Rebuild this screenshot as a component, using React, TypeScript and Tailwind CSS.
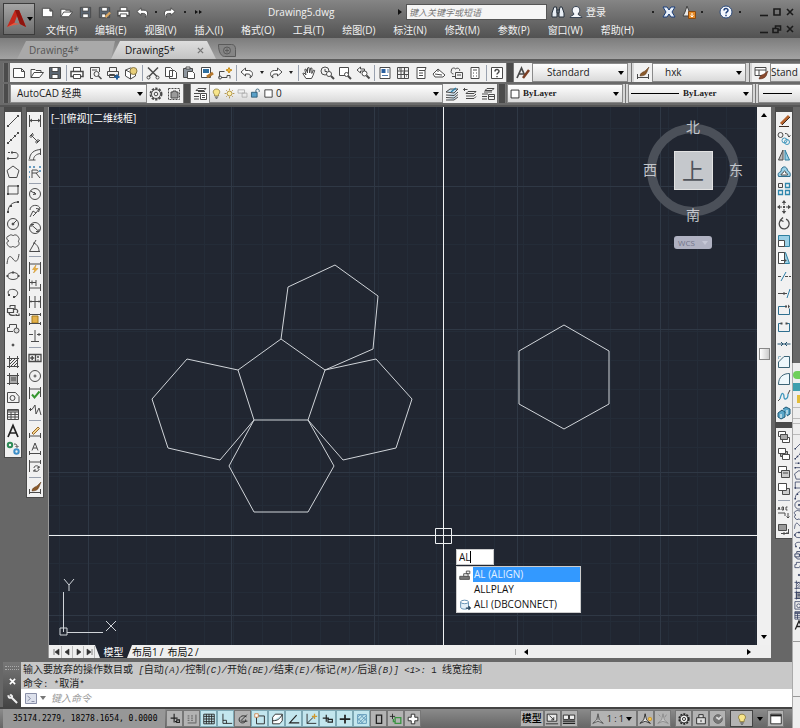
import type { ReactNode } from 'react';
import clsx from 'clsx';

// Every glyph lives on a 16x16 grid and inherits its stroke from the <svg>
const icons: Record<string, ReactNode> = {
  // file + edit
  new: <path d="M2.500 3.500h8l3 3v6h-11zM10.500 3.500v3h3" fill="#fff" />,
  open: (
    <>
      <path d="M2 12.500v-8h4l1 1h5v2" fill="#fff" />
      <path d="M2 12.500l3-5h9.500l-4 5z" fill="#fff" />
    </>
  ),
  save: (
    <>
      <path d="M2.500 2.500h11v11h-11z" fill="#5b6672" />
      <path d="M5 2.500h6v4H5zM5 9.500h6v4H5z" fill="#fff" />
    </>
  ),
  saveAs: (
    <>
      <path d="M2.500 2.500h11v11h-11z" fill="#5b6672" />
      <path d="M5 2.500h6v4H5zM5 9.500h4v4H5z" fill="#fff" />
      <path d="M9 13l5-5" stroke="#d9a561" strokeWidth="2.500" />
    </>
  ),
  print: (
    <>
      <path d="M4.500 6V2.500h7V6" fill="#fff" />
      <path d="M2 6.500h12v5H2z" fill="#fff" strokeWidth="1.500" />
      <path d="M4.500 9.500h7v4h-7z" fill="#fff" />
    </>
  ),
  preview: (
    <>
      <path d="M6 13.500H3.500v-11h9V7M5 5h5" />
      <circle cx="9.500" cy="9" r="2.500" />
      <path d="M11.500 11l3 3" strokeWidth="1.500" />
    </>
  ),
  publish: (
    <>
      <path d="M4.500 6V2.500h7V6M2.500 6.500h11v4h-11zM4.500 9.500h5v3h-5z" />
      <path d="M12 9.500v5M9.500 12h5" stroke="#1f5d9c" strokeWidth="2" />
    </>
  ),
  cube: (
    <>
      <path d="M2.500 5l5-2 5 2v6l-5 3-5-3zM2.500 5l5 2.500V14" fill="#fff" />
      <circle cx="10.500" cy="6" r="3.500" fill="#e8cf7a" stroke="#8b7a45" />
    </>
  ),
  cut: (
    <>
      <path d="M3 2.500l9 9M13 2.500l-9 9" strokeWidth="1.500" />
      <circle cx="3.500" cy="12.500" r="1.500" />
      <circle cx="12.500" cy="12.500" r="1.500" />
    </>
  ),
  copy: <path d="M2.500 2.500h5l2 2v7h-7zM6.500 5.500h5l2 2v6h-7z" fill="#fff" />,
  paste: (
    <>
      <path d="M2.500 3.500h9v9h-9z" fill="#8d959d" />
      <path d="M5 2h4v2H5z" fill="#fff" />
      <path d="M6.500 6.500h5l2 2v5h-7z" fill="#fff" />
    </>
  ),
  match: (
    <>
      <path d="M2.500 2.500h9v10h-9z" fill="#fff" />
      <path d="M4 4h6v4H4z" fill="#2f6f9f" stroke="none" />
      <path d="M8 12l6-4" stroke="#b5772c" strokeWidth="3" />
    </>
  ),
  block: (
    <>
      <path d="M2.500 6.500h5M2.500 6.500v6M4 12.500h6v-2h3v3" />
      <circle cx="3" cy="12.500" r="1.500" />
      <path d="M12 2.500l1 2 2 .5-2 1-1 2-1-2-2-1 2-.5z" fill="#f0b83c" stroke="#c58c1c" />
    </>
  ),
  undo: <path d="M2 7l4.500-4v2.500h3c5 0 5 5.500 1.500 7.500 1-3 0-4-2-4H6.500v2z" fill="#fff" />,
  redo: <path d="M14 7L9.500 3v2.500h-3c-5 0-5 5.500-1.500 7.500-1-3 0-4 2-4h2.500v2z" fill="#fff" />,
  hand: (
    <path
      d="M5 13.500L1.800 8.500l1.200-.5 2 2-1.200-5.500 1.200-.5 1.500 4V3l1.500-.5.7 5.500 1-5 1.300.2-.2 5.300 1.700-3.500 1.200.5-1.700 5-1.500 3z"
      fill="#fff"
    />
  ),
  zoomRt: (
    <>
      <circle cx="6" cy="6" r="4" />
      <path d="M6 4v2.500h2" />
      <circle cx="10" cy="9" r="2.500" fill="#fff" />
      <path d="M12 11l3 3" strokeWidth="2" />
    </>
  ),
  zoomWin: (
    <>
      <path d="M2.500 2.500h9v8h-9z" fill="#fff" />
      <circle cx="9.500" cy="9.500" r="2" fill="#fff" />
      <path d="M11 11l3 3" strokeWidth="2" />
    </>
  ),
  zoomPrev: (
    <>
      <path d="M5.500 2L2 5l3.500 3V6h4V4h-4z" fill="#fff" />
      <circle cx="9.500" cy="8.500" r="2.500" fill="#fff" />
      <path d="M11.500 10.500l3 3" strokeWidth="2" />
    </>
  ),
  props: (
    <>
      <path d="M3 2.500h10v11H3z" fill="#fff" />
      <path d="M4.500 4h4v4h-4z" fill="#2a5f9e" stroke="none" />
      <path d="M10 5h2M10 7h2M5 10.500h6" stroke="#5179a8" />
    </>
  ),
  design: <path d="M2.500 2.500h11v11h-11zM6 2.500v11M9.500 2.500v11M2.500 6h11M2.500 9.500h11M4 4h1M8 8h1M11 11h1" />,
  palette: <path d="M4 2.500h9l-1 3v8H4zM6 5.500h6M6 8h4M6 10.500h4" fill="#fff" />,
  sheet: <path d="M2 9l5-5 7 6-2 2H4zM4 9l7 1M7 4v3" fill="#fff" />,
  markup: <path d="M2.500 5c0-3 4-2 4-1 2-2 5 0 4 2M2.500 5c-1 2 0 4 2 4M6.500 7.500h7v6h-7zM8 10h4M3 11.500h3" />,
  calc: <path d="M4 2.500h8v11H4zM6 5h4M6 8h1M9 8h1M6 11h1M9 11h1" fill="#fff" />,
  help: (
    <>
      <path d="M2.500 2.500h11v11h-11z" fill="#fff" />
      <path d="M6 6.500C6 4 10 4 10 6.300 10 8 8 8 8 9.500M8 11v1.200" strokeWidth="1.500" />
    </>
  ),
  textStyle: (
    <>
      <path d="M2 13L6.500 3 10 11M4 9h4.500" strokeWidth="1.700" />
      <path d="M8 13l6-8" stroke="#7b3f25" strokeWidth="2.500" />
    </>
  ),
  dimStyle: (
    <>
      <path d="M2.500 9v5M13.500 9v5M2.500 12.500h11" />
      <path d="M5 11c0-3 3-4 5-5l4-4-2 5c-1 3-4 4-7 4z" fill="#8a5a2b" stroke="#5f3b1c" strokeWidth=".5" />
    </>
  ),
  tableStyle: (
    <>
      <path d="M2 2.500h11v8H2zM2 5h11M6 5v5" fill="#fff" />
      <path d="M6 14c1-4 3-4 5-5l4-3-2 5c-1 2-4 3-7 3z" fill="#8b4a2e" stroke="#5c2d19" strokeWidth=".5" />
    </>
  ),
  // layers + workspace
  gear: (
    <>
      <circle cx="8" cy="8" r="5.500" strokeDasharray="2.300 1.200" strokeWidth="2" />
      <circle cx="8" cy="8" r="4.500" fill="#f1f1f1" />
      <circle cx="8" cy="8" r="1.800" />
    </>
  ),
  gearBox: (
    <>
      <path d="M2.500 2.500h11v11h-11z" strokeDasharray="2 1" />
      <path d="M5 6h2V5h3v1h2v6H5z" fill="#9a9a9a" />
    </>
  ),
  layers: <path d="M6 2.500h8l-2 2H4zM6 5.500h7M2 7.500h6M2 10.500h5M2 13h5M8.500 7.500h6v6h-6zM10 9.500h3M10 11.500h3" fill="#fff" />,
  layerA: (
    <>
      <path d="M2 6l4-3h8l-4 4zM2 9l8 .5L14 6M2 11.500l8 .5 4-3.500M2 14h8l4-3" fill="#c8e0ef" />
      <path d="M7 6l5-4" stroke="#2b7fa8" strokeWidth="1.500" />
    </>
  ),
  layerB: <path d="M1.500 3.500h4M3 2L1.500 3.500 3 5M6 5.500h8l-2 2H4zM4 10h8l2-2M4 12.500h8l2-2" />,
  layerC: <path d="M5 4.500l2-2h7l-2 2zM2 8h6M4 6h8M2 10.500h5M2 13h5M8.500 8.500h6v5h-6zM8.500 10.500h6" />,
  bulb: (
    <>
      <path d="M5.500 9C2.500 6 4.500 2.500 8 2.500S13.500 6 10.500 9v2h-5z" fill="#f8e58a" stroke="#8a7a3a" />
      <path d="M6 12.500h4M7 14h2" />
    </>
  ),
  sun: (
    <>
      <circle cx="8" cy="8" r="3" fill="#fdf1b0" stroke="#a5832d" />
      <path d="M8 2v2M8 12v2M2 8h2M12 8h2M4 4l1 1M11 11l1 1M12 4l-1 1M5 11l-1 1" stroke="#a5832d" />
    </>
  ),
  vpFreeze: <path d="M2.500 3.500h8v4h-8zM7.500 7.500h6v5h-6z" stroke="#aaa" />,
  unlock: (
    <>
      <path d="M3 6.500h7v6H3z" fill="#5aa0c8" stroke="#24536e" />
      <path d="M8.500 6.500V4c0-2 4-2 4 0v2" stroke="#24536e" />
    </>
  ),
  square: <path d="M3.500 3.500h9v9h-9z" fill="#fff" stroke="#222" />,
  // draw
  line: (
    <>
      <path d="M3 13L13 3" />
      <path d="M2 12h2v2H2zM12 2h2v2h-2z" fill="currentColor" stroke="none" />
    </>
  ),
  xline: (
    <>
      <path d="M3 13L13 3" strokeDasharray="5 1" />
      <path d="M2 12h2v2H2zM12 2h2v2h-2zM5 9h2v2H5zM9 5h2v2H9z" fill="currentColor" stroke="none" />
    </>
  ),
  pline: (
    <>
      <path d="M3 11.500h7c4 0 4-6 0-6H7M3 5.500h2" />
      <path d="M2 10.500h2v2H2zM6 4.500h2v2H6z" fill="currentColor" stroke="none" />
    </>
  ),
  polygon: <path d="M8 2l6 4.500-2.200 7H4.200L2 6.500z" />,
  rect: (
    <>
      <path d="M3 4h10v8H3z" />
      <path d="M2 11h2v2H2zM12 3h2v2h-2z" fill="currentColor" stroke="none" />
    </>
  ),
  arc: (
    <>
      <path d="M3 13C3 7 7 3 13 3" />
      <path d="M2 12h2v2H2zM12 2h2v2h-2zM5 6h2v2H5z" fill="currentColor" stroke="none" />
    </>
  ),
  circle: (
    <>
      <circle cx="8" cy="8" r="5.500" />
      <path d="M8 8l4-4" />
      <circle cx="8" cy="8" r="1" fill="currentColor" />
    </>
  ),
  cloud: <path d="M4 8C1 7 1 3 4 3c1-2 4-1 4 0 1-2 5-1 5 1 2 1 1 4 0 4 2 2 1 5-1 5-1 2-4 1-4 0-1 2-5 1-5-1-2-1-1-4 1-4z" />,
  spline: <path d="M2 13C3 3 6 5 8 8s5 4 6-5" />,
  ellipse: (
    <>
      <ellipse cx="8" cy="8" rx="5.500" ry="3.500" />
      <path d="M1.500 7h2v2h-2zM12.500 7h2v2h-2zM7 3.500h2v2H7z" fill="currentColor" stroke="none" />
    </>
  ),
  earc: (
    <>
      <path d="M4 10C1 5 6 4 9 4.500s6 4 1 7.500" />
      <path d="M3 9h2v2H3zM8 11h2v2H8z" fill="currentColor" stroke="none" />
    </>
  ),
  insert: <path d="M5 3.500h5v4M5 3.500v2M2.500 6.500h6v4h-6zM8 8c3-2 6 0 4 3M4 10.500c0 4 6 3 8 2M11 13.500h3v-2" strokeWidth="1.200" />,
  makeBlock: (
    <>
      <path d="M8 11.500H2.500v-4h2v-3h7v5" />
      <circle cx="11.500" cy="10.500" r="2.500" fill="#ddd" />
    </>
  ),
  point: <circle cx="8" cy="8" r="1" fill="currentColor" />,
  hatch: <path d="M2 4.500h12M2 12.500h12M4.500 2v12M12.500 2v12M5 7l3-3M5 10l6-6M6 12l6-6M9 12l3-3" />,
  gradient: (
    <>
      <path d="M4.500 4.500h8v8h-8z" fill="#aaa" />
      <path d="M2 4.500h12M2 12.500h12M4.500 2v12M12.500 2v12M6 7h5M6 9h5" />
    </>
  ),
  region: (
    <>
      <path d="M2.500 3.500h8l3.500 4v6H2.500z" />
      <circle cx="7.500" cy="9" r="2.500" />
    </>
  ),
  table: <path d="M2.500 3.500h11v10h-11zM2.500 6h11M2.500 8.500h11M2.500 11h11M6 6v7.500M10 6v7.500M2.500 4.700h11" />,
  text: <path d="M3 14L8 2.500 13 14M5 10h6" strokeWidth="1.700" stroke="#222" />,
  addSel: (
    <>
      <circle cx="5" cy="5" r="2.200" stroke="#2e8b57" strokeWidth="2" />
      <circle cx="11.500" cy="11.500" r="2.200" stroke="#3d8fc9" strokeWidth="2" />
      <path d="M9 4c3 0 3 1 3 3M10.500 6l1.500 1.500L13.500 6" />
    </>
  ),
  // dimension
  dLinear: <path d="M2.500 2v12M13.500 2v12M2.500 7.500h11M5 6L3 7.500 5 9M11 6l2 1.500L11 9" />,
  dAligned: <path d="M4 5l7 7M2.500 6.500L6 3M9.500 13.500L13 10M4 8V5h3M8 12h3V9" />,
  dArc: <path d="M2.500 12C3 6 7 3 13.500 2.500M6.500 13c0-4 3-6 7-6.500M1.500 13h7M13.500 1.500V8" />,
  dOrd: (
    <>
      <path d="M5 14V6h4c3 0 3 3 0 3H5M9 9l4 5" />
      <path d="M2 3h2M7 2v2M12 3h2M2 8h1M2 13h1M13 6v2" stroke="#3b7fae" strokeWidth="1.500" />
    </>
  ),
  dRadius: (
    <>
      <circle cx="8" cy="8" r="5.500" />
      <path d="M3.500 5L9 8M7 6l2 2-3 .5" />
    </>
  ),
  dJog: <path d="M3 7c0-6 10-6 10-1M3 14l3-6 3 2 3-4M9 5.500l3.500.5-1 3M6 13l3-3" />,
  dDia: (
    <>
      <circle cx="8" cy="8" r="5.500" />
      <path d="M4 4.500l8 7M4 7V4.500h3M12 9v2.500H9" />
    </>
  ),
  dAng: <path d="M13 13.500H2.500L9 2M6 5c3 0 6 4 6 8" />,
  dQuick: (
    <>
      <path d="M2.500 2v12M13.500 2v12M2.500 4h11" />
      <path d="M9 5L5.500 9.500H8L6.500 13 11 8.500H8z" fill="#f4b23a" stroke="#c58a1c" strokeWidth=".5" />
    </>
  ),
  dBase: <path d="M2.500 2v12M9 3v6M13.500 7v7M2.500 5.500H9M2.500 11h11M5 3.500v4" />,
  dCont: <path d="M2.500 2v12M8 2v12M13.500 2v12M2.500 7.500h11M4 6.500v2M12 6.500v2" />,
  dSpace: (
    <>
      <path d="M5 5h6v7H5z" fill="#e3b04a" stroke="#a67c1e" />
      <path d="M2.500 2v3M13.500 2v3M2.500 3.500h11M2.500 11v3M13.500 11v3M2.500 12.500h11" />
    </>
  ),
  dBreak: <path d="M8 2v11M2 6.500h4M10 6.500h4M12 5v3M4 13.500h8" />,
  tol: (
    <>
      <path d="M2 4.500h12v7H2zM8.500 4.500v7" strokeWidth="1.300" />
      <path d="M5.200 6v4M3.200 8h4M11 6v2M11 9.500v1" strokeWidth="1.500" />
    </>
  ),
  center: (
    <>
      <circle cx="8" cy="8" r="5.500" />
      <path d="M8 6.500v3M6.500 8h3" />
    </>
  ),
  inspect: (
    <>
      <path d="M2.500 2v12M13.500 2v10M2.500 4h11" />
      <path d="M5 9.500l2.500 3 5-6" stroke="#35962f" strokeWidth="2" />
    </>
  ),
  jogLine: <path d="M2 7.500h3L8 3l1 9 3-6 2 7M3.500 6v3" />,
  dEdit: (
    <>
      <path d="M2.500 9v5M13.500 9v5M2.500 12h11" />
      <path d="M5 9l6-6 1.500 1.500-6 6z" fill="#f4d58e" stroke="#9b6a2b" />
    </>
  ),
  dText: <path d="M2.500 10v4M13.500 10v4M2.500 12.500h11M5 9.500L8 2l3 7.500M6 7h4" />,
  dUpdate: <path d="M2.500 2v12M13.500 2v4M2.500 4h11M7 10c0-3 5-3 5 0M12 11c0 3-5 3-5 1M12 8v2h-2M7 14v-2h2" />,
  // modify
  erase: (
    <>
      <path d="M5 11l8-8" stroke="#b5622c" strokeWidth="3" />
      <path d="M6 12l8-8M3 13.500h10" stroke="#3b2b22" />
    </>
  ),
  mcopy: (
    <>
      <circle cx="4.500" cy="5" r="2.500" />
      <circle cx="8.500" cy="10.500" r="2.500" stroke="#3f97bd" />
      <circle cx="11" cy="12" r="2.500" stroke="#3f97bd" />
      <path d="M9 3.500c2 0 4 1 4 3.500M11.500 5.500L13 7l1.500-1.500" />
    </>
  ),
  mirror: (
    <>
      <path d="M7 3v10H2.500z" fill="#bbb" />
      <path d="M9 3v10h4.500z" fill="#9bd0e6" stroke="#2f7f9f" />
    </>
  ),
  offset: (
    <>
      <path d="M2.500 12.500c-1-3 0-4 2.500-5 0-6 6-6 6.500-1 2 1 3.500 3 2.500 6z" fill="#9bd0e6" stroke="#2f6f8f" />
      <path d="M5 11c0-2 2-1 2.500-3 1-2 2-1 2 1 2 0 2 1 2 2z" fill="#fff" />
    </>
  ),
  array: (
    <>
      <path d="M2.500 2.500h4v4h-4z" />
      <path d="M9.500 2.500h4v4h-4zM2.500 9.500h4v4h-4zM9.500 9.500h4v4h-4z" stroke="#2f87ad" strokeWidth="1.300" />
    </>
  ),
  move: (
    <>
      <path d="M8 2v12M2 8h12" strokeDasharray="4 4" />
      <path d="M8 1l2.200 3H5.800zM8 15l2.200-3H5.800zM1 8l3-2.200v4.400zM15 8l-3-2.200v4.400zM7 7h2v2H7z" fill="currentColor" stroke="none" />
    </>
  ),
  rotate: <path d="M5 4a5 5 0 1 0 5-.8M7 1.500L4.500 4l3 1.500" strokeWidth="1.300" />,
  scale: (
    <>
      <path d="M2.500 2.500h11v11h-11z" fill="#9bd0e6" stroke="#2f7f9f" />
      <path d="M2.500 7.500h6v6h-6z" fill="#fff" />
    </>
  ),
  stretch: (
    <>
      <path d="M2.500 2.500h7l4 11h-11z" fill="#9bd0e6" stroke="#2f7f9f" />
      <path d="M2.500 2.500h6v11h-6z" fill="#fff" />
      <path d="M5 10.500h5M8.500 9l1.500 1.500L8.500 12" />
    </>
  ),
  trim: (
    <>
      <path d="M2 8.500h4M9 8.500h6" strokeDasharray="3 1" />
      <path d="M5 13l5-9" stroke="#2f7fa8" />
    </>
  ),
  extend: (
    <>
      <path d="M2 8.500h9M8 7v3" />
      <path d="M11 13l3-9" stroke="#2f7fa8" />
    </>
  ),
  breakPt: (
    <>
      <path d="M11 4.500H2.500v8h11v-6" stroke="#2f6f8f" />
      <path d="M9 3.500h2v2H9zM12 2.500l2 2-2 2z" fill="currentColor" stroke="none" />
    </>
  ),
  brk: (
    <>
      <path d="M5.500 4.500h-3v8h11v-8h-3" stroke="#2f6f8f" />
      <path d="M4.500 3.500h2v2h-2zM9.500 3.500h2v2h-2z" fill="currentColor" stroke="none" />
    </>
  ),
  join: <path d="M1.500 8h13M5 6l2 2-2 2M11 6L9 8l2 2" stroke="#24536e" />,
  chamfer: (
    <>
      <path d="M2.500 13.500V8L8 2.500h5.500v11z" stroke="#3c6476" fill="#eef8fc" />
      <path d="M2.500 5v-2.500H5" stroke="#8fb4c4" />
    </>
  ),
  fillet: <path d="M2.500 13.500C2.500 6 7 2.500 13.500 2.500v11z" stroke="#3c6476" fill="#eef8fc" />,
  blend: (
    <>
      <path d="M4 11c2-9 4-5 4-2s4 3 4-3" stroke="#3f97bd" strokeWidth="1.300" />
      <path d="M2 13l2-2M12 6l2-4" />
    </>
  ),
  explode: (
    <>
      <path d="M2 8l4-3 3 2v5l-4 2-3-2zM7 4l3-2 4 2v5l-3 2" fill="#5ba7c9" stroke="#1f5875" />
      <path d="M5 9v4M11 5v4" stroke="#fff" />
    </>
  ),
  orderA: (
    <>
      <path d="M2.500 2.500h7v5h-7zM6.500 8.500h7v5h-7z" fill="#fff" />
      <path d="M4.500 5.500h7v5h-7z" fill="#aaa" />
    </>
  ),
  orderB: (
    <>
      <path d="M4.500 5.500h7v5h-7z" fill="#aaa" />
      <path d="M2.500 2.500h7v5h-7zM6.500 8.500h7v5h-7z" fill="#fff" />
    </>
  ),
  orderC: (
    <>
      <path d="M2.500 2.500h8v6h-8z" fill="#fff" />
      <path d="M5.500 6.500h8v7h-8zM7 9h5" fill="#ccc" />
    </>
  ),
  orderD: (
    <>
      <path d="M6.500 7.500h7v6h-7z" fill="#ccc" />
      <path d="M2.500 2.500h8v7h-8z" fill="#fff" />
    </>
  ),
  abcFront: <path d="M2 6l1-3 1 3M6 3v3h1.500V3zM11.500 3H10v3h1.500M2 9h7v3M12 9v5M10.500 12.500L12 14l1.500-1.500" />,
  hatchBack: (
    <>
      <path d="M2.500 3.500h8v6h-8z" fill="#999" />
      <path d="M5 12.500h8M12.500 8v5M8 11v3M10.500 11l2 2" />
    </>
  ),
  // status bar
  infer: <path d="M7 2v10M3 7h8M10 9h3v3h-3zM8 11h2" strokeWidth="1.300" />,
  snap: <path d="M3 4.500h2M7 4.500h2M3 7h2M7 7h2M3 9.500h2M7 9.500h2M12.500 3v9M3 12.500h10" stroke="#555" />,
  grid: <path d="M2 2.500h12v11H2zM5 2.500v11M8 2.500v11M11 2.500v11M2 5h12M2 8h12M2 11h12" />,
  ortho: <path d="M4.500 2v11H15M4.500 9.500h4v3.500" />,
  polar: <path d="M12 5.500C7 2 2 7 4 10.500s8 2 7-2M5.500 10l7-7M6 10.500h7" />,
  osnap: (
    <>
      <path d="M4 4.500h9v9H4z" />
      <path d="M2 2h4v4H2z" fill="#fff" stroke="#c9824a" />
    </>
  ),
  osnap3d: <path d="M3 6l3-3.500h8V10l-3 3.500H3zM3 10c6 0 8-2 11-7" fill="#fff" />,
  otrack: <path d="M14 12.500H3L11 3.500" strokeWidth="1.300" />,
  ducs: (
    <>
      <path d="M3.500 2v11H14M3.500 13l7-7" />
      <path d="M12 2v6M9 5h6" stroke="#d19a2c" strokeWidth="1.500" />
    </>
  ),
  dyn: <path d="M6 3v8M2 7h7M8 8.500h5v3H8z" strokeWidth="1.300" />,
  lwt: <path d="M8 3v10M2 8h12" strokeWidth="2" />,
  tpy: <path d="M3 3h10v10H3zM3 6l3-3M3 10l7-7M4 13l9-9M7 13l6-6M3 7l6 6M6 3l7 7" stroke="#5a93b5" />,
  qp: <path d="M5 3.500h6v9.500H5z" strokeWidth="1.500" />,
  sc: (
    <>
      <path d="M4 2v6M1 5h6" />
      <path d="M7 6.500h6.500v6.500H7zM5 8v3h2" stroke="#3b9443" strokeWidth="1.500" />
    </>
  ),
  am: <path d="M6 2.500h4V6h3.500v4H10v3.500H6V10H2.500V6H6z" fill="#fff" />,
  modelSp: (
    <>
      <path d="M2.500 2.500h11v8h-11z" fill="#e8e8e8" />
      <path d="M5 4l5 5M10 6v3H7M1 13.500h14" />
    </>
  ),
  quickView: (
    <>
      <path d="M1.500 3.500h6v5h-6zM8.500 3.500h6v5h-6z" fill="#f0f0f0" />
      <path d="M1 10.500h14M1 13h14" strokeWidth="1.300" />
    </>
  ),
  annot: <path d="M8 2L6.500 9 2 13l6-2.500 6 2.500-4.500-4zM8 5v5" fill="#fff" />,
  annotVis: (
    <>
      <path d="M7 2L5.500 9 1 13l6-2.500 6 2.500-4.500-4z" fill="#fff" />
      <circle cx="12.500" cy="8" r="2" fill="#f6c64b" stroke="#c9962b" />
    </>
  ),
  annotOff: <path d="M8 2L6.500 9 2 13l6-2.500 6 2.500-4.500-4zM3 3l2 2M12 3l-2 3" stroke="#888" fill="#ccc" />,
  padlock: <path d="M3 6.500h10v7H3zM5.500 6.500V3h5v3.500M8 9v2.500" fill="#ddd" />,
  ball: (
    <>
      <circle cx="8" cy="8" r="5" fill="#777" stroke="#666" />
      <path d="M6 6l3 2 3-3" stroke="#ddd" strokeWidth="2" />
    </>
  ),
  clean: (
    <>
      <path d="M2 2.500h12v11H2z" fill="#fff" />
      <path d="M2 4h12" strokeWidth="2" />
    </>
  ),
  align: (
    <>
      <path d="M2 9.500h11V13H2z" fill="#777" />
      <path d="M6.500 6.500h5v3h-5zM9.500 3.500h4v3h-4z" fill="#eee" />
    </>
  ),
  db: (
    <>
      <path d="M3 4.500v6c0 3 9 3 9 0v-6" fill="#e4f0f8" stroke="#5787ad" />
      <ellipse cx="7.500" cy="4.500" rx="4.500" ry="2" fill="#fff" stroke="#5787ad" />
      <path d="M9 11.500h5M12 9.500l2 2-2 2" stroke="#27445c" strokeWidth="1.500" />
    </>
  ),
};

const Icon = ({ name, size = 'size-4', color = 'text-[#4a4a4a]' }: { name: string; size?: string; color?: string }) => (
  <svg viewBox="0 0 16 16" className={clsx('shrink-0', size, color)} fill="none" stroke="currentColor" aria-hidden="true">
    {icons[name]}
  </svg>
);

const Caret = ({ className = 'text-black' }: { className?: string }) => (
  <svg viewBox="0 0 6 4" className={clsx('pointer-events-none h-1 w-1.5 shrink-0', className)} fill="currentColor" aria-hidden="true">
    <path d="M0 0h6L3 4z" />
  </svg>
);

// '|' is a divider, 'v' a drop-down arrow, anything else an icon
const HBar = ({ items }: { items: string[] }) => (
  <div className="flex h-full shrink-0 items-center bg-[#f1f1f1]">
    {items.map((item, i) => {
      if (item === '|') {
        return <span key={i} className="flex w-1 justify-center"><span className="h-4 w-px bg-gray-400" /></span>;
      }
      if (item === 'v') {
        return (
          <button key={i} aria-label="更多" className="flex w-[11px] justify-center">
            <svg viewBox="0 0 4 3" className="h-[3px] w-1" fill="#222" aria-hidden="true"><path d="M0 0h4L2 3z" /></svg>
          </button>
        );
      }
      return (
        <button key={i} aria-label={item} className="flex h-full w-[18px] items-center justify-center">
          <Icon name={item} />
        </button>
      );
    })}
  </div>
);

const VBar = ({ items, className }: { items: string[]; className?: string }) => (
  <div className={clsx('flex w-[18px] flex-col border border-[#4a4a4a] bg-[#f1f1f1]', className)}>
    <div className="h-1 shrink-0 bg-[#4b4b4b]" />
    {items.map((item, i) =>
      item === '|' ? (
        <span key={i} className="flex h-[5px] shrink-0 items-center px-0.5"><span className="h-px w-full bg-gray-400" /></span>
      ) : (
        <button key={i} aria-label={item} className="flex min-h-0 flex-1 items-center justify-center">
          <Icon name={item} size="size-4" />
        </button>
      ),
    )}
  </div>
);

const Grip = ({ className = 'w-2' }: { className?: string }) => (
  <span className={clsx('h-full shrink-0 border-x border-[#777] bg-[#4b4b4b]', className)} />
);

// Light gap with a thin rule, used between neighbouring combos
const ThinGrip = ({ className = 'w-1.5' }: { className?: string }) => (
  <span className={clsx('flex h-full shrink-0 justify-center bg-[#d6d6d6]', className)}><span className="h-full w-px bg-[#777]" /></span>
);

const Combo = ({ label, value, className, pad = 'pl-1', serif = false, children }: {
  label: string; value: string; className: string; pad?: string; serif?: boolean; children?: ReactNode;
}) => (
  <div className={clsx('flex h-full min-w-0 items-center border border-[#8a8a8a] bg-linear-to-b from-white to-[#dadada] pr-[3px]', className)}>
    {children}
    <select
      aria-label={label}
      defaultValue={value}
      className={clsx(
        'h-full min-w-0 flex-1 appearance-none bg-transparent text-[#1c1c1c] outline-none',
        pad,
        serif ? "font-['Liberation_Serif',serif] text-[9px] font-bold" : 'text-[10px]',
      )}
    >
      <option>{value}</option>
    </select>
    <Caret />
  </div>
);

const menus = ['文件(F)', '编辑(E)', '视图(V)', '插入(I)', '格式(O)', '工具(T)', '绘图(D)', '标注(N)', '修改(M)', '参数(P)', '窗口(W)', '帮助(H)'];

const standardBar = [
  'new', 'open', 'save', '|', 'print', 'preview', 'publish', 'cube', '|', 'cut', 'copy', 'paste', 'match', 'block', '|',
  'undo', 'v', 'redo', 'v', '|', 'hand', 'zoomRt', 'zoomWin', 'zoomPrev', '|',
  'props', 'design', 'palette', 'sheet', 'markup', 'calc', '|', 'help',
];
const drawBar = [
  'line', 'xline', 'pline', 'polygon', 'rect', 'arc', 'circle', 'cloud', 'spline', 'ellipse',
  'earc', 'insert', 'makeBlock', 'point', 'hatch', 'gradient', 'region', 'table', 'text', 'addSel',
];
const dimBar = [
  'dLinear', 'dAligned', 'dArc', 'dOrd', '|', 'dRadius', 'dJog', 'dDia', 'dAng', '|', 'dQuick', 'dBase', 'dCont', 'dSpace', 'dBreak', '|',
  'tol', 'center', 'inspect', 'jogLine', '|', 'dEdit', 'dText', 'dUpdate', '|', 'dimStyle',
];
const modifyBar = [
  'erase', 'mcopy', 'mirror', 'offset', 'array', 'move', 'rotate', 'scale', 'stretch',
  'trim', 'extend', 'breakPt', 'brk', 'join', 'chamfer', 'fillet', 'blend', 'explode',
];
const orderBar = ['orderA', 'orderB', 'orderC', 'orderD', '|', 'abcFront', 'hatchBack'];

const toggles = [
  { name: 'infer', on: false }, { name: 'snap', on: false }, { name: 'grid', on: true }, { name: 'ortho', on: true },
  { name: 'polar', on: false }, { name: 'osnap', on: true }, { name: 'osnap3d', on: true }, { name: 'otrack', on: true },
  { name: 'ducs', on: true }, { name: 'dyn', on: true }, { name: 'lwt', on: true }, { name: 'tpy', on: true },
  { name: 'qp', on: false }, { name: 'sc', on: false }, { name: 'am', on: false },
];

const Header = () => (
  <header className="flex h-[38px] shrink-0 bg-linear-to-b from-[#858585] to-[#525252] text-[#f2f2f2]">
    <button aria-label="应用程序菜单" className="mt-[3px] ml-[3px] flex h-8 w-8 shrink-0 items-center border border-[#3c3c3c] bg-linear-to-b from-[#a5a5a5] to-[#6d6d6d] pl-[3px]">
      <svg viewBox="0 0 20 22" className="h-[22px] w-5" aria-hidden="true">
        <path d="M0 19L8 2h4l7 17-6-3-3-8-3 8z" fill="#c5281c" />
        <path d="M8 2h4l7 17-6-3z" fill="#8e150f" />
        <path d="M0 19l7-4 6 1-6 1z" fill="#e8573f" />
      </svg>
      <Caret />
    </button>
    <div className="min-w-0 flex-1">
      <div className="flex h-6 items-center">
        <div className="flex w-[223px] shrink-0 items-center pl-[3px]">
          {['new', 'open', 'save', 'saveAs', 'print', 'undo'].map((name) => (
            <button key={name} aria-label={name} className="flex w-[19px] justify-center"><Icon name={name} size="size-[15px]" /></button>
          ))}
          <span className="flex w-2 justify-center"><span className="size-0.5 bg-[#222]" /></span>
          <button aria-label="重做" className="flex w-[19px] justify-center"><Icon name="redo" size="size-[15px]" /></button>
          <span className="flex w-3 justify-center"><span className="size-0.5 bg-[#222]" /></span>
          <svg viewBox="0 0 8 6" className="ml-1 h-1.5 w-2" fill="#111" aria-hidden="true"><path d="M0 1l3 2-3 2zM4 1l3 2-3 2z" /></svg>
        </div>
        <h1 className="w-[140px] shrink-0 pl-2.5 text-[10px]">Drawing5.dwg</h1>
        <svg viewBox="0 0 4 6" className="h-1.5 w-1 shrink-0" fill="#111" aria-hidden="true"><path d="M0 0l4 3-4 3z" /></svg>
        <input aria-label="搜索" placeholder="键入关键字或短语" className="ml-1 h-4 w-[141px] min-w-0 border border-[#555] bg-[#f5f5f5] px-0.5 text-[9px] italic placeholder:text-[#777]" />
        <svg viewBox="0 0 14 12" className="ml-1 h-3 w-3.5 shrink-0" fill="#e8eef4" stroke="#27313d" aria-hidden="true">
          <path d="M3 1h2.500l.5 5v5H1V7zM9 1h2l2 6v4H8V6zM6 4h2v3H6z" />
        </svg>
        <svg viewBox="0 0 14 14" className="ml-1 size-3.5 shrink-0" fill="#f4f6fa" stroke="#3a4656" aria-hidden="true">
          <path d="M1 12.500c0-2 4-2 4-3.500-3-3-2-7.500 2-7.500s5 4.500 2 7.500c0 1.500 4 1.500 4 3.500z" />
        </svg>
        <a href="#signin" className="ml-[3px] shrink-0 text-[10px]">登录</a>
        <div className="ml-auto flex shrink-0 items-center">
          <span className="mr-2 size-0.5 bg-[#222]" />
          <svg viewBox="0 0 14 12" className="h-3 w-3.5" aria-hidden="true">
            <path d="M1 1h4l2 3 2-3h4l-3 5 3 5H9L7 8l-2 3H1l3-5z" fill="#e9f1fb" stroke="#1c3f7a" />
          </svg>
          <svg viewBox="0 0 15 14" className="ml-1.5 h-3.5 w-[15px]" aria-hidden="true">
            <path d="M1 11h6V6l-2-5-2 6z" fill="#e8e8e8" stroke="#444" />
            <path d="M6.500 6.500h7v7h-7z" fill="#e78b27" stroke="#8a4a10" />
            <path d="M10 8v4M8.500 10.500L10 12l1.500-1.500" stroke="#fff" fill="none" />
          </svg>
          <span className="ml-1 size-0.5 bg-[#222]" />
          <svg viewBox="0 0 14 14" className="ml-4 size-3.5" aria-hidden="true">
            <circle cx="7" cy="7" r="6" fill="#f4f7fc" stroke="#2b4a7c" />
            <path d="M5 5.500C5 3 9 3 9 5.300 9 7 7 6.800 7 8.500M7 9.800v1.400" stroke="#20407a" strokeWidth="1.500" fill="none" />
          </svg>
          <span className="mx-1.5 size-0.5 bg-[#222]" />
        </div>
        <WindowButtons />
      </div>
      <div className="flex items-start text-[10px] leading-3">
        <nav className="flex flex-1 gap-[18px] pl-[11px] whitespace-nowrap">
          {menus.map((m) => <button key={m}>{m}</button>)}
        </nav>
        <WindowButtons restore />
      </div>
    </div>
  </header>
);

const WindowButtons = ({ restore = false }: { restore?: boolean }) => (
  <div className="flex w-[53px] shrink-0 items-center gap-0.5 pl-3 text-[#1b1b1b]">
    {['M1 8.500h8', restore ? 'M1 4.500h5v4H1zM3.500 4V2h5v4H6' : 'M2 2h6v6H2z', 'M2 2l6 6M8 2L2 8'].map((d) => (
      <button key={d} aria-label="窗口" className="w-[11px]">
        <svg viewBox="0 0 10 10" className="size-2.5" fill="none" stroke="currentColor" strokeWidth="1.600" aria-hidden="true"><path d={d} /></svg>
      </button>
    ))}
  </div>
);

const FileTabs = () => (
  <div className="flex h-[23px] shrink-0 items-end border-b-2 border-[#5c5c5c] bg-linear-to-b from-[#7d7d7d] to-[#a3a3a3] pl-[17px] text-[10px]">
    <button className="h-[18px] w-[98px] bg-[#a9a9a9] pl-3 text-left leading-4 text-[#555] [clip-path:polygon(9px_0,100%_0,calc(100%_-_4px)_100%,0_100%)]">Drawing4*</button>
    <div className="-ml-1 flex h-[18px] w-[105px] items-center bg-linear-to-b from-[#dedede] to-[#c4c4c4] pl-3.5 text-[#111] [clip-path:polygon(9px_0,calc(100%_-_9px)_0,100%_100%,0_100%)]">
      <button className="flex-1 text-left leading-4">Drawing5*</button>
      <button aria-label="关闭" className="mr-3">
        <svg viewBox="0 0 8 8" className="size-[7px]" stroke="#777" strokeWidth="1.500" aria-hidden="true"><path d="M1 1l6 6M7 1L1 7" /></svg>
      </button>
    </div>
    <button aria-label="新图形" className="mb-0.5 ml-0.5">
      <svg viewBox="0 0 18 13" className="h-[13px] w-[18px]" fill="#858585" stroke="#5a5a5a" aria-hidden="true">
        <path d="M.5.5h13c3 0 4 2 4 5v7h-11c-3 0-6-4-6-12z" />
        <circle cx="9" cy="6.500" r="3.500" />
        <path d="M9 4.500v4M7 6.500h4" />
      </svg>
    </button>
  </div>
);

const Toolbars = () => (
  <div className="flex shrink-0 flex-col gap-0.5 border-b-2 border-[#555] bg-[#6a6a6a] py-0.5">
    <div className="flex h-[19px] items-center pl-[3px]">
      <Grip className="mr-px w-1.5" />
      <HBar items={standardBar} />
      <Grip className="w-2" />
      <HBar items={['textStyle']} />
      <Combo label="文字样式" value="Standard" className="w-[96px]" pad="pl-3.5" />
      <ThinGrip />
      <HBar items={['dimStyle']} />
      <Combo label="标注样式" value="hxk" className="w-[94px]" pad="pl-3" />
      <ThinGrip />
      <HBar items={['tableStyle']} />
      <div className="flex h-full min-w-0 flex-1 items-center border border-r-0 border-[#8a8a8a] bg-linear-to-b from-white to-[#dadada] text-[10px] text-[#1c1c1c]">Stand</div>
    </div>
    <div className="flex h-[19px] items-center pl-[3px]">
      <Grip className="mr-px w-1.5" />
      <Combo label="工作空间" value="AutoCAD 经典" className="w-[137px]" pad="pl-1.5" />
      <HBar items={['gear', 'gearBox']} />
      <Grip className="w-2" />
      <HBar items={['layers']} />
      <Combo label="图层" value="0" className="w-[234px]" pad="pl-px">
        <span className="flex items-center">
          {['bulb', 'sun', 'vpFreeze', 'unlock', 'square'].map((name) => <Icon key={name} name={name} size="size-[13px]" />)}
        </span>
      </Combo>
      <HBar items={['layerA', 'layerB', 'layerC']} />
      <Grip className="mx-px w-2" />
      <Combo label="颜色" value="ByLayer" className="w-[116px]" pad="pl-px" serif>
        <Icon name="square" size="size-3.5" />
      </Combo>
      <ThinGrip className="w-[5px]" />
      <Combo label="线型" value="ByLayer" className="w-[125px]" serif>
        <span className="ml-0.5 h-px w-12 bg-black" />
      </Combo>
      <ThinGrip className="w-[5px]" />
      <div className="flex h-full min-w-0 flex-1 items-center border border-r-0 border-[#8a8a8a] bg-linear-to-b from-white to-[#dadada] pr-2 pl-1"><span className="h-px w-full bg-black" /></div>
    </div>
  </div>
);

const Drawing = () => (
  <svg className="absolute inset-0 h-full w-full" fill="none" stroke="#d0d4d9" strokeWidth="1" aria-label="图形">
    <defs>
      <pattern id="minor" x="10" y="21" width="29" height="29" patternUnits="userSpaceOnUse">
        <path d="M.5 0v29M0 .5h29" stroke="#242c38" />
      </pattern>
      <pattern id="major" x="39" y="79" width="143" height="143" patternUnits="userSpaceOnUse">
        <path d="M.5 0v143M0 .5h143" stroke="#2f3845" />
      </pattern>
    </defs>
    <rect width="100%" height="100%" fill="url(#minor)" stroke="none" />
    <rect width="100%" height="100%" fill="url(#major)" stroke="none" />
    <path d="M232 232l44 31-17 50h-54l-16-50z" />
    <path d="M232 232l7-52 47-22 43 31-5 53-48 21" />
    <path d="M276 263l51-11 36 40-16 49-53 12-35-40" />
    <path d="M189 263l-51-11-35 40 16 49 52 12 34-40" />
    <path d="M205 313l-25 46 25 46h54l26-46-26-46" />
    <path d="M515 218l45 26v53l-45 25-45-25v-53z" />
    {/* crosshair */}
    <path d="M394.500 0v2000M0 428.500h2000M386.500 421.500h16v15h-16z" stroke="#eef0f2" />
    {/* UCS icon */}
    <path d="M14.500 485v40M18 525.500h36M11 521h7v7h-7z" />
    <path d="M15 472l5 6 5-6M20 478v6M57 514l10 10M67 514l-10 10" />
  </svg>
);

const ViewCube = () => (
  <div className="absolute top-[14px] right-[14px] w-[100px] text-[#c3c6cb]">
    <div className="relative mx-auto flex h-[98px] items-center justify-center">
      <div className="absolute size-[92px] rounded-full border-[9px] border-[#4b5059]" />
      <button aria-label="上" className="flex size-[39px] items-center justify-center border border-[#e2e2e2] bg-[#c5c8cc] text-[22px] text-[#50545b]">上</button>
      <button className="absolute -top-0.5 left-1/2 -translate-x-1/2 text-[14px] leading-4">北</button>
      <button className="absolute -bottom-1 left-1/2 -translate-x-1/2 text-[14px] leading-4">南</button>
      <button className="absolute top-1/2 left-0 -translate-y-1/2 text-[14px] leading-4">西</button>
      <button className="absolute top-1/2 right-0 -translate-y-1/2 text-[14px] leading-4">东</button>
    </div>
    <button className="mx-auto mt-[17px] flex h-[13px] w-[38px] items-center justify-between rounded-[3px] bg-[#b0b2c2] px-1 text-[8px] text-[#73758a]">
      WCS<Caret className="text-[#c6c8d6]" />
    </button>
  </div>
);

const suggestions = [
  { icon: 'align', text: 'AL (ALIGN)' },
  { icon: '', text: 'ALLPLAY' },
  { icon: 'db', text: 'ALI (DBCONNECT)' },
];

const DynamicInput = () => (
  <div className="absolute top-[442px] left-[407px] text-[10px] text-[#111]">
    <input aria-label="动态输入" defaultValue="AL" className="block h-4 w-[38px] border border-[#ccc] bg-white px-0.5" />
    <span className="absolute top-0.5 left-[14px] h-3 w-px bg-black" />
    <ul className="mt-px w-[125px] border border-[#ccc] bg-white">
      {suggestions.map((s, i) => (
        <li key={s.text} className="flex h-[15px] items-center">
          <span className="flex w-4 shrink-0 justify-center">{s.icon && <Icon name={s.icon} size="size-3.5" />}</span>
          <button className={clsx('h-full flex-1 pl-px text-left leading-[15px]', i === 0 && 'bg-[#3399ff] text-[#e4f1ff]')}>{s.text}</button>
        </li>
      ))}
    </ul>
  </div>
);

const LayoutTabs = () => (
  <div className="flex h-[13px] shrink-0 items-center bg-[#efefef] pl-0.5 text-[10px] leading-3 text-[#111]">
    {['M2 1v6M7 1L3 4l4 3z', 'M6 1L2 4l4 3z', 'M3 1l4 3-4 3z', 'M2 1l4 3-4 3zM7 1v6'].map((d) => (
      <button key={d} aria-label="布局" className="flex h-3 w-[11px] items-center justify-center border-r border-[#bbb]">
        <svg viewBox="0 0 9 8" className="h-2 w-[9px]" fill="#333" stroke="#333" strokeWidth=".6" aria-hidden="true"><path d={d} /></svg>
      </button>
    ))}
    <button className="h-[13px] w-[37px] bg-[#212631] text-white [clip-path:polygon(0_0,100%_0,calc(100%_-_5px)_100%,5px_100%)]">模型</button>
    <button>布局1</button>
    <span className="px-0.5">/</span>
    <button className="pl-0.5">布局2</button>
    <span className="px-0.5">/</span>
    <div className="ml-auto flex w-[256px] items-center justify-between border-l border-[#aaa] pr-5 pl-2">
      <svg viewBox="0 0 4 6" className="h-1.5 w-1" aria-hidden="true"><path d="M4 0L0 3l4 3z" /></svg>
      <svg viewBox="0 0 4 6" className="h-1.5 w-1" aria-hidden="true"><path d="M0 0l4 3-4 3z" /></svg>
    </div>
  </div>
);

const Mono = ({ children }: { children: string }) => (
  <span className="font-['Liberation_Mono',monospace] text-[9px]">{children}</span>
);

const options = [['自动', '(A)/'], ['控制', '(C)/'], ['开始', '(BE)/'], ['结束', '(E)/'], ['标记', '(M)/'], ['后退', '(B)]']];

const CommandLine = () => (
  <div className="flex shrink-0 pl-[3px] text-[10px] text-[#1e1e1e]">
    <div className="flex w-[18px] shrink-0 flex-col items-center gap-2 bg-linear-to-b from-[#777] to-[#444] pt-1">
      <span className="h-1 w-3.5 border-y border-dotted border-[#aaa]" />
      <button aria-label="关闭">
        <svg viewBox="0 0 8 8" className="size-[7px]" stroke="#fff" strokeWidth="1.800" aria-hidden="true"><path d="M1 1l6 6M7 1L1 7" /></svg>
      </button>
      <button aria-label="自定义">
        <svg viewBox="0 0 12 12" className="size-[11px]" fill="none" stroke="#eee" strokeWidth="2.200" aria-hidden="true"><path d="M5 5l6 6M1.500 2.500c0 4 4 3 4 1l-2-2" /></svg>
      </button>
    </div>
    <div className="min-w-0 flex-1">
      <div className="h-[27px] bg-[#c8c8c8] pt-px pl-0.5 leading-3 whitespace-nowrap">
        <p>
          输入要放弃的操作数目或<i><Mono>{' ['}</Mono></i>
          {options.map(([name, key]) => <span key={name}>{name}<i><Mono>{key}</Mono></i></span>)}
          <i><Mono>{' <1>: '}</Mono></i><Mono>{'1 '}</Mono>线宽控制
        </p>
        <p>命令<Mono>{': *'}</Mono>取消<Mono>*</Mono></p>
      </div>
      <label className="flex h-[18px] items-center bg-white pl-1">
        <svg viewBox="0 0 12 11" className="h-[11px] w-3" fill="#dde1ec" stroke="#8a90a8" aria-hidden="true">
          <path d="M.5.5h11v10H.5zM2.500 3l3 2.500-3 2.500M6.500 8.500h3" />
        </svg>
        <Caret className="mx-[3px] text-[#777]" />
        <input aria-label="命令" placeholder="键入命令" className="ml-0.5 flex-1 bg-transparent text-[10px] italic outline-none placeholder:text-[#999]" />
      </label>
    </div>
  </div>
);

const StatusButton = ({ name, on = false }: { name: string; on?: boolean }) => (
  <button aria-label={name} className={clsx('flex h-[17px] w-[17px] shrink-0 items-center justify-center border', on ? 'border-[#7fa9b5] bg-[#c3e6ee]' : 'border-[#777] bg-[#b3b3b3]')}>
    <Icon name={name} size="size-3.5" color="text-[#222]" />
  </button>
);

const StatusBar = () => (
  <footer className="flex h-[21px] shrink-0 items-center border-t-2 border-[#444] bg-linear-to-b from-[#8b8b8b] to-[#666] pl-[3px]">
    <div className="flex h-full w-[162px] shrink-0 items-center bg-[#979797] pl-2.5 font-['DejaVu_Sans_Mono',monospace] text-[8px] whitespace-pre text-black">35174.2279, 18278.1654, 0.0000</div>
    <div className="flex pl-px">
      {toggles.map((t) => <StatusButton key={t.name} {...t} />)}
    </div>
    <div className="ml-auto flex items-center pr-4">
      <button className="h-[17px] border border-[#777] bg-[#b3b3b3] px-px text-[10px] leading-[15px] font-medium text-black">模型</button>
      <StatusButton name="modelSp" />
      <StatusButton name="quickView" />
      <button className="ml-3 flex h-[17px] items-center border border-[#777] bg-[#b3b3b3] pr-1 text-[9px] text-[#222]">
        <Icon name="annot" size="size-3.5" /><span className="px-0.5">1 : 1</span><Caret />
      </button>
      <StatusButton name="annotVis" />
      <StatusButton name="annotOff" />
      <span className="w-1" />
      <StatusButton name="gear" />
      <StatusButton name="padlock" />
      <StatusButton name="ball" />
      <button aria-label="隔离对象" className="ml-1 flex h-[17px] w-[23px] items-center justify-center border border-[#444] bg-[#b3b3b3]"><Icon name="bulb" size="size-3.5" /></button>
      <span className="px-1"><Caret /></span>
      <StatusButton name="clean" />
    </div>
  </footer>
);

// Sliver of the second window that overlaps the right edge
const OtherWindow = () => (
  <aside className="absolute top-[363px] right-0 bottom-0 w-2 overflow-hidden border-l border-[#aaa] bg-[#eee]">
    <div className="mt-2 h-2 w-4 rounded-l-full bg-[#6fcf5a]" />
    <div className="mt-1 h-2 bg-[#3f9fae]" />
    <div className="mt-1 ml-1 h-2 bg-[#e3bd3a]" />
    <div className="mt-1 h-3 border-y border-[#bbb]" />
    <div className="mt-1 h-3 border-y border-[#bbb]" />
    <div className="mt-1 flex flex-col">
      {drawBar.slice(0, 19).map((name) => <span key={name} className="h-[10px] w-3"><Icon name={name} size="size-3" color="text-[#2f3a5c]" /></span>)}
    </div>
    <div className="mt-3 h-14 border-y border-[#999]" />
  </aside>
);

const App = () => (
  <div className="relative flex h-screen min-h-[600px] w-full flex-col overflow-hidden bg-[#676767] font-['Open_Sans','Noto_Sans_CJK_SC',sans-serif]">
    <Header />
    <FileTabs />
    <Toolbars />
    <main className="flex min-h-0 flex-1 pb-1">
      <div className="flex w-[49px] shrink-0 items-start gap-1 border-r border-[#999] pl-1">
        <VBar items={drawBar} className="h-[351px]" />
        <VBar items={dimBar} className="h-[391px]" />
      </div>
      <div className="flex min-w-0 flex-1 flex-col">
        <div className="flex min-h-0 flex-1">
          <div className="relative min-w-0 flex-1 overflow-hidden bg-[#212631]">
            <Drawing />
            <span className="absolute top-[5px] left-0.5 text-[10px] leading-3 text-white">[−][俯视][二维线框]</span>
            <ViewCube />
            <DynamicInput />
          </div>
          <div className="flex w-3.5 shrink-0 flex-col items-center bg-[#f0f0f0] py-1.5">
            <Caret className="rotate-180" />
            <div className="flex-[231]" />
            <span className="h-3 w-[11px] border border-[#888] bg-linear-to-r from-white to-[#ccc]" />
            <div className="flex-[275]" />
            <Caret />
          </div>
        </div>
        <LayoutTabs />
      </div>
      <div className="flex w-[29px] shrink-0 flex-col pl-1">
        <VBar items={modifyBar} className="h-[316px]" />
        <VBar items={orderBar} className="h-[116px]" />
      </div>
    </main>
    <CommandLine />
    <StatusBar />
    <OtherWindow />
  </div>
);

export default App;
